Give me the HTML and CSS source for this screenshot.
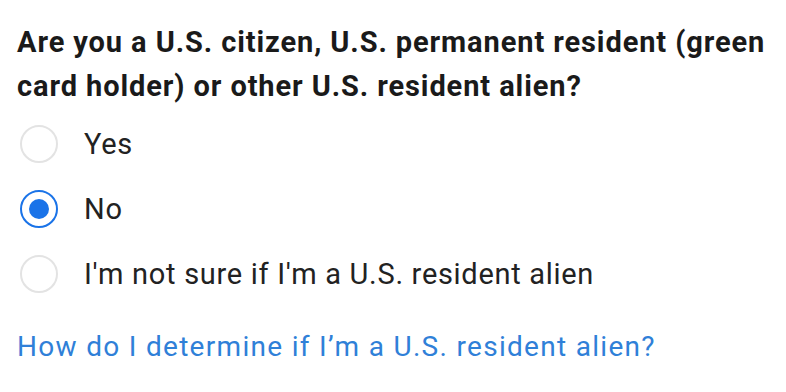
FILE: index.html
```html
<!DOCTYPE html>
<html lang="en">
<head>
    <meta charset="UTF-8">
    <meta name="viewport" content="width=device-width, initial-scale=1.0">
    <title>Resident status</title>
    <link rel="stylesheet" href="styles.css">
</head>
<body>
    <div class="question">
        <h1>Are you a U.S. citizen, U.S. permanent resident (green card holder) or other U.S. resident alien?</h1>
        <div class="options">
            <label class="option">
                <span class="radio"></span>
                <span>Yes</span>
            </label>
            <label class="option">
                <span class="radio checked"></span>
                <span>No</span>
            </label>
            <label class="option">
                <span class="radio"></span>
                <span>I'm not sure if I'm a U.S. resident alien</span>
            </label>
        </div>
        <a class="help" href="#">How do I determine if I’m a U.S. resident alien?</a>
    </div>
</body>
</html>
```

FILE: styles.css
```css
body {
    margin: 0;
    background-color: #fff;
    font-family: Roboto, "Noto Sans", sans-serif;
    color: #222;
}

.question {
    padding: 20px 10px 0 17px;
}

h1 {
    margin: 0;
    font-size: 29px;
    font-weight: 700;
    line-height: 44px;
    letter-spacing: 0.9px;
    color: #1a1a1a;
}

.options {
    margin-top: 3px;
}

.option {
    display: flex;
    align-items: center;
    height: 65px;
    font-size: 29px;
    letter-spacing: 0.7px;
}

.radio {
    box-sizing: border-box;
    width: 38px;
    height: 38px;
    margin: 0 26px 0 3px;
    border: 2px solid #e3e3e3;
    border-radius: 50%;
    display: flex;
    align-items: center;
    justify-content: center;
}

.radio.checked {
    border-color: #1a73e8;
}

.radio.checked::after {
    content: "";
    width: 20px;
    height: 20px;
    border-radius: 50%;
    background-color: #1a73e8;
}

.help {
    display: block;
    margin-top: 24px;
    font-size: 28px;
    letter-spacing: 1.3px;
    color: #2f80d8;
    text-decoration: none;
}
```
